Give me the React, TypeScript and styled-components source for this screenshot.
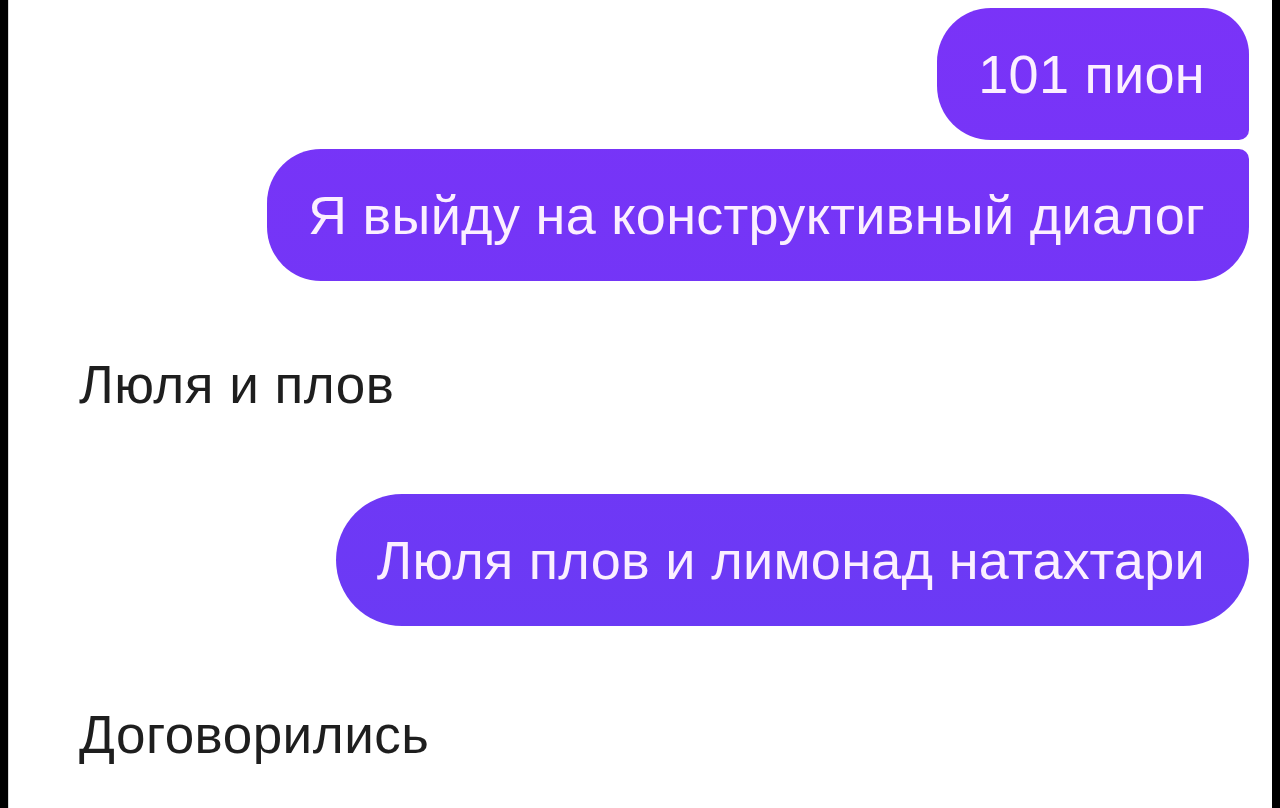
import * as React from 'react';
import styled, { createGlobalStyle } from 'styled-components';

const GlobalStyle = createGlobalStyle`
	html, body {
		margin: 0;
		padding: 0;
		background: #000;
	}
	body {
		font-family: 'Liberation Sans', Arial, sans-serif;
	}
`;

// Outgoing bubbles share one screen-wide gradient, so lower bubbles look bluer.
const bubbleGradient = 'linear-gradient(180deg, #7a33f8 0%, #7236f6 45%, #663df4 100%)';
const bubbleText = '#fbefff';
const bigRadius = '54px';
const tailRadius = '10px';

const Screen = styled.div`
	box-sizing: border-box;
	width: 1264px;
	height: 808px;
	margin-left: 8px;
	background: #fff;
	border-left: 1px solid #d8d8d8;
	overflow: hidden;
	padding: 8px 23px 0 70px;
	display: flex;
	flex-direction: column;
`;

type TailSide = 'top' | 'bottom' | 'none';

const Bubble = styled.div<{ $tail: TailSide; $gap: number }>`
	align-self: flex-end;
	margin-top: ${(p) => p.$gap}px;
	box-sizing: border-box;
	height: 132px;
	display: flex;
	align-items: center;
	padding: 0 44px 0 41px;
	background: ${bubbleGradient};
	background-attachment: fixed;
	color: ${bubbleText};
	font-size: 54px;
	line-height: 60px;
	letter-spacing: 0.3px;
	white-space: nowrap;
	border-radius: ${(p) =>
		p.$tail === 'bottom'
			? `${bigRadius} 46px ${tailRadius} ${bigRadius}`
			: p.$tail === 'top'
				? `${bigRadius} ${tailRadius} ${bigRadius} ${bigRadius}`
				: '66px'};
`;

const Incoming = styled.div<{ $gap: number }>`
	margin-top: ${(p) => p.$gap}px;
	color: #1e1e1e;
	font-size: 53px;
	line-height: 60px;
	letter-spacing: 0.5px;
	white-space: nowrap;
`;

export default function App() {
	return (
		<>
			<GlobalStyle />
			<Screen>
				<Bubble $tail="bottom" $gap={0}>101 пион</Bubble>
				<Bubble $tail="top" $gap={9}>Я выйду на конструктивный диалог</Bubble>
				<Incoming $gap={74}>Люля и плов</Incoming>
				<Bubble $tail="none" $gap={79}>Люля плов и лимонад натахтари</Bubble>
				<Incoming $gap={79}>Договорились</Incoming>
			</Screen>
		</>
	);
}
